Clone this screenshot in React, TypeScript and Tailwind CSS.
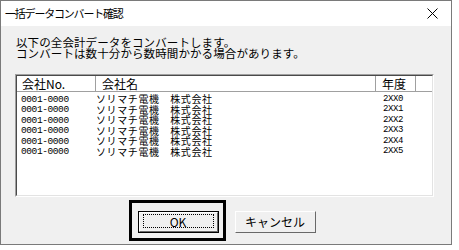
import { FC } from 'react';

const rows = ['2XX0', '2XX1', '2XX2', '2XX3', '2XX4', '2XX5'];

const Button: FC<{ label: string; focused?: boolean }> = ({ label, focused }) => {
  return (
    <div className={`relative w-[81px] h-[22px] ${focused ? 'border border-black' : ''}`}>
      <div className="h-full w-full border-t border-l border-white border-r border-b border-r-[#696969] border-b-[#696969] bg-[#f0f0f0] flex items-center justify-center text-[12px] leading-none">
        {label}
      </div>
      {focused && <div className="absolute left-[4px] right-[4px] top-[2px] bottom-[4px] border border-dotted border-black" />}
    </div>
  );
};

export default function App() {
  return (
    <div className="w-[459px] h-[250px] bg-white font-['Noto_Sans_CJK_JP',sans-serif] text-black">
      <div className="w-[452px] h-[245px] border border-[#7a7a7a] bg-[#f0f0f0] flex flex-col">
        <div className="h-[25px] bg-white flex items-center justify-between pl-[4px] pr-[13px]">
          <span className="text-[11px] tracking-[-1.2px] leading-none">一括データコンバート確認</span>
          <svg width="11" height="11" viewBox="0 0 11 11">
            <path d="M0.5 0.5 L10.5 10.5 M10.5 0.5 L0.5 10.5" stroke="#000" strokeWidth="1" />
          </svg>
        </div>

        <div className="pt-[11px] pl-[15px] text-[11.5px] leading-[11px] tracking-[0.1px]">
          <p>以下の全会計データをコンバートします。</p>
          <p>コンバートは数十分から数時間かかる場合があります。</p>
        </div>

        <div className="mt-[15px] ml-[14px] w-[419px] h-[123px] border-t border-l border-[#a0a0a0] border-r-white border-b-white border-r border-b">
          <div className="h-full w-full border-t border-l border-[#4a4a4a] border-r border-b border-r-[#e3e3e3] border-b-[#e3e3e3] bg-white flex flex-col">
            <div className="h-[16px] flex text-[12px] leading-none border-b border-[#a0a0a0]">
              <div className="w-[79px] pl-[5px] flex items-center border-r border-[#a0a0a0]">会社No.</div>
              <div className="w-[280px] pl-[6px] flex items-center border-r border-[#a0a0a0]">会社名</div>
              <div className="w-[40px] pl-[6px] flex items-center border-r border-[#a0a0a0]">年度</div>
              <div className="flex-1" />
            </div>
            <div className="pt-[2px] flex flex-col">
              {rows.map((year) => (
                <div key={year} className="h-[10.5px] flex items-center">
                  <div className="w-[79px] pl-[4px] font-['Liberation_Mono',monospace] text-[9.5px] leading-none tracking-[-0.4px]">
                    0001-0000
                  </div>
                  <div className="w-[280px] text-[10px] leading-none tracking-[0.6px]">ソリマチ電機　株式会社</div>
                  <div className="pl-[7px] font-['Liberation_Mono',monospace] text-[9px] leading-none tracking-[-0.4px]">
                    {year}
                  </div>
                </div>
              ))}
            </div>
          </div>
        </div>

        <div className="mt-[14px] flex justify-center gap-[16px] pl-[1px]">
          <div className="relative">
            <Button label="OK" focused />
            <div className="absolute -left-[9px] -top-[11px] -right-[7px] -bottom-[8px] border-[3px] border-black pointer-events-none" />
          </div>
          <Button label="キャンセル" />
        </div>
      </div>
    </div>
  );
}
